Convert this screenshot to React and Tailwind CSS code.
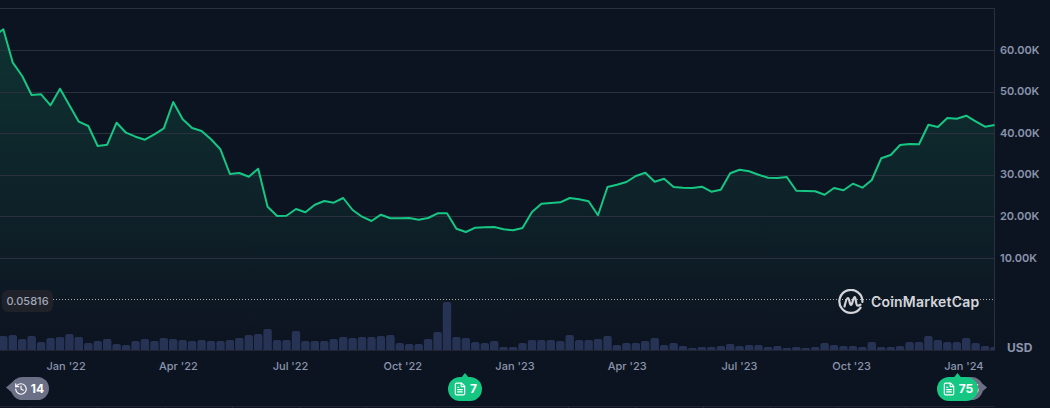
import { History, FileText } from 'lucide-react';

const prices = [
  36, 29.3, 62.7, 76, 95, 94.3, 105.3, 88.7, 105.3, 121.7, 126, 146, 144.7, 122.7, 132.7, 136.7, 139.7, 134.3, 128.3,
  102, 119.3, 128, 131, 139.3, 149.3, 174, 173, 176.7, 168.7, 206.7, 216, 215.7, 209, 212.3, 204.7, 201, 202.7, 198,
  210, 216.7, 221, 214.7, 218.3, 218.3, 218, 219.7, 218, 213.3, 213.3, 228.7, 232, 227.7, 227.3, 227, 229.3, 230.3,
  228, 212, 203.7, 203, 202.3, 198, 199.3, 201.3, 215.3, 187, 184.7, 182, 176, 172.7, 181.7, 178.7, 187, 187.7, 188,
  186.7, 191.7, 189.7, 173.3, 169.7, 171.3, 174.7, 177.7, 178, 177, 190.7, 191, 191.3, 194.7, 188, 190.3, 183.7,
  187.7, 180, 158.3, 155, 145, 144, 144.3, 124.7, 127, 118, 118.7, 115.7, 121.3, 126.7, 125,
];

const volumes = [
  14, 14, 15, 11, 14, 8, 12, 13, 16, 13, 7, 9, 11, 6, 5, 9, 11, 9, 12, 11, 10, 9, 10, 9, 9, 10, 12, 15, 16, 21, 10, 10,
  19, 9, 9, 9, 11, 13, 12, 13, 13, 14, 15, 7, 6, 6, 11, 18, 48, 13, 12, 8, 7, 9, 3, 3, 7, 10, 10, 10, 9, 15, 10, 10,
  11, 14, 5, 7, 7, 9, 12, 5, 7, 4, 2, 3, 3, 4, 6, 4, 5, 5, 3, 4, 2, 3, 2, 3, 7, 5, 4, 4, 3, 8, 3, 3, 4, 8, 8, 14, 10,
  8, 8, 12, 7, 4, 3,
];

const gridLines = [8.5, 50.5, 92.5, 133.5, 175.5, 216.5, 258.5];
const yLabels = ['60.00K', '50.00K', '40.00K', '30.00K', '20.00K', '10.00K'];
const xLabels = ["Jan '22", "Apr '22", "Jul '22", "Oct '22", "Jan '23", "Apr '23", "Jul '23", "Oct '23", "Jan '24"];
const ticks = Array.from({ length: 15 }, (_, i) => 30 + i * 67.3);

const xAt = (i) => (i * 9.44 - 6.11).toFixed(1);
const linePoints = prices.map((y, i) => `${xAt(i)},${y}`).join(' ');
const areaPath = `M${xAt(0)},350 L${linePoints.replaceAll(' ', ' L')} L995,350 Z`;
const barsPath = volumes
  .map((h, i) => {
    const left = i * 9.44 - 6.11 - 4.2;
    const r = Math.min(2, h / 2);
    const top = 350 - h;
    return `M${left.toFixed(1)},350 V${top + r} q0,-${r} ${r},-${r} H${(left + 8.4 - r).toFixed(1)} q${r},0 ${r},${r} V350 Z`;
  })
  .join(' ');

function PriceChart() {
  return (
    <svg width="995" height="352" viewBox="0 0 995 352" className="block">
      <defs>
        <linearGradient id="area" gradientUnits="userSpaceOnUse" x1="0" y1="30" x2="0" y2="345">
          <stop offset="0" stopColor="#16c784" stopOpacity="0.17" />
          <stop offset="1" stopColor="#16c784" stopOpacity="0" />
        </linearGradient>
      </defs>
      <path d={areaPath} fill="url(#area)" />
      {gridLines.map((y) => (
        <line key={y} x1="0" x2="995" y1={y} y2={y} stroke="#2b303e" />
      ))}
      <line x1="50" x2="994" y1="299.5" y2="299.5" stroke="#a6abb5" strokeDasharray="1 2" />
      <path d={barsPath} fill="#263354" />
      <line x1="0" x2="995" y1="350.5" y2="350.5" stroke="#222531" />
      <line x1="994.5" x2="994.5" y1="8" y2="350" stroke="#2b303e" />
      <polyline points={linePoints} fill="none" stroke="#16c784" strokeWidth="2" strokeLinejoin="round" />
    </svg>
  );
}

function Logo() {
  return (
    <div className="absolute left-[838px] top-[289px] flex items-center gap-[7px] text-[#d3d5da]">
      <svg width="26" height="26" viewBox="0 0 26 26" fill="none" stroke="currentColor" strokeWidth="2.2" strokeLinecap="round" strokeLinejoin="round">
        <path d="M22.6 18.6A11.5 11.5 0 1 1 24.4 13" />
        <path d="M6.5 17.5 C7.5 13 9 9 10 9 C11.5 9 11.5 16 13 16 C14.5 16 15 8 16.7 8 C18.3 8 17.5 16 19.5 16.5 C20.5 16.7 21.5 16.4 22.5 15.6" />
      </svg>
      <span className="text-[14px] leading-[26px] font-semibold tracking-[0.2px] whitespace-nowrap">CoinMarketCap</span>
    </div>
  );
}

function GreenBadge({ count, className }) {
  return (
    <div className={`relative h-[24px] flex items-center justify-center gap-[3px] rounded-full bg-[#16c784] text-white ${className}`}>
      <span className="absolute left-1/2 top-[-4px] h-[5px] w-[8px] -translate-x-1/2 bg-[#16c784] [clip-path:polygon(50%_0,100%_100%,0_100%)]" />
      <FileText size={14} strokeWidth={2} />
      <span className="text-[12px] font-bold leading-none">{count}</span>
    </div>
  );
}

export default function App() {
  return (
    <div className="h-[408px] w-[1050px] overflow-hidden bg-[#0d1421] font-['Inter',sans-serif]">
      <div className="flex h-[352px]">
        <div className="relative w-[995px]">
          <PriceChart />
          <div className="absolute left-[2px] top-[290px] flex h-[22px] w-[51px] items-center justify-center rounded-[6px] bg-[#1f2229] text-[11px] font-medium text-[#a1a7bb]">
            0.05816
          </div>
          <Logo />
        </div>
        <div className="flex flex-1 flex-col pl-[5px] pt-[29px] text-[11px] font-semibold text-[#8a94ad]">
          {yLabels.map((label) => (
            <div key={label} className="flex h-[41.6px] items-center">
              {label}
            </div>
          ))}
          <div className="mt-auto mb-[-5px] pl-[7px] text-[12px] font-bold">USD</div>
        </div>
      </div>

      <div className="grid h-[20px] w-[1020px] grid-cols-9 pl-[10px] pt-[7px] text-center text-[11px] font-medium leading-[14px] text-[#8a94ad]">
        {xLabels.map((label) => (
          <span key={label}>{label}</span>
        ))}
      </div>

      <div className="flex h-[33.5px] pt-[5px]">
        <div className="relative ml-[11px] flex h-[23px] w-[38px] items-center justify-end gap-[3px] rounded-full bg-[#6b7087] pr-[5px] text-white">
          <span className="absolute left-[-5px] top-[2px] h-[17px] w-[10px] bg-[#6b7087] [clip-path:polygon(0_50%,100%_0,100%_100%)]" />
          <History size={14} strokeWidth={2} className="relative" />
          <span className="relative text-[12px] font-bold leading-none">14</span>
        </div>
        <GreenBadge count="7" className="ml-[399px] w-[34px]" />
        <GreenBadge count="75" className="z-10 ml-[455px] w-[41px]" />
        <div className="relative ml-[-30px] flex h-[23px] w-[35px] items-center justify-end rounded-r-full bg-[#6b7087] pr-[4px]">
          <span className="absolute right-[-4px] top-[2px] h-[17px] w-[10px] bg-[#6b7087] [clip-path:polygon(100%_50%,0_0,0_100%)]" />
          <span className="relative text-[12px] font-bold leading-none text-white">75</span>
        </div>
      </div>

      <div className="flex h-[2.5px] w-[995px] border-t border-[#222531]">
        {ticks.map((x) => (
          <span key={x} className="ml-[66.3px] h-[3px] w-px bg-[#222531] first:ml-[30px]" />
        ))}
      </div>
    </div>
  );
}
